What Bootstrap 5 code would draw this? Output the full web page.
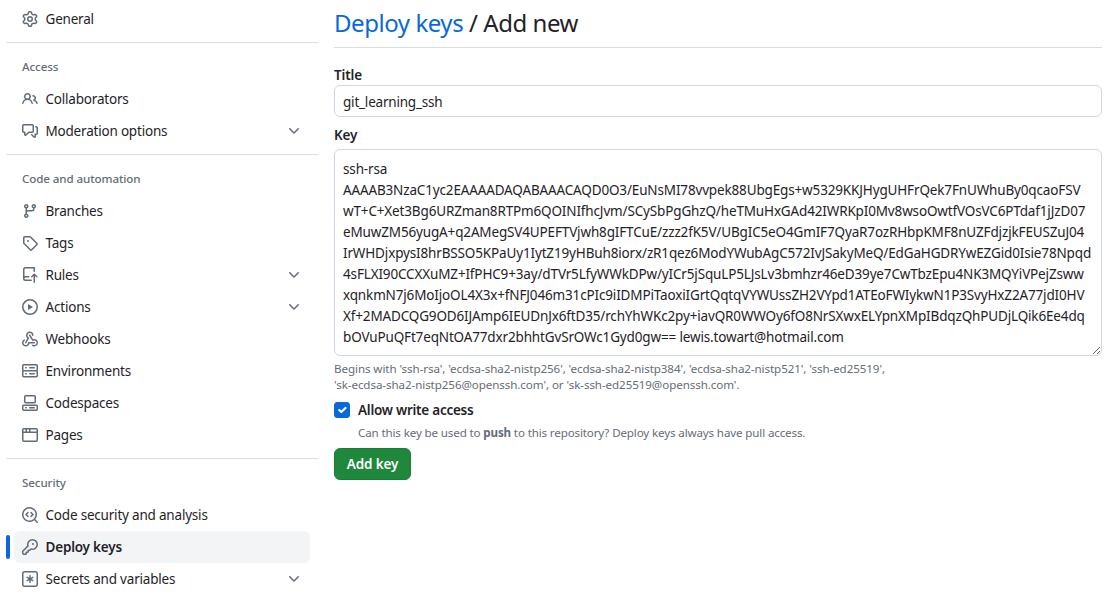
<!DOCTYPE html>
<html>
<head>
    <title>Deploy keys - Add new</title>
    <link rel="stylesheet" href="https://cdn.jsdelivr.net/npm/bootstrap@5.3.0/dist/css/bootstrap.min.css">
    <style>
        body { font-family: "Noto Sans", "Liberation Sans", sans-serif; font-size: 13.5px; color: #1f2328; background: #fff; overflow: hidden; }
        .page-wrap { height: 599px; }
        .side-menu { width: 312px; margin-left: 6px; padding-top: 3px; flex-shrink: 0; }
        .side-item { position: relative; height: 32px; margin: 0 8px; padding: 0 8px; gap: 7.5px; border-radius: 6px; color: #1f2328; text-decoration: none; letter-spacing: -.2px; }
        .side-item svg { width: 16px; height: 16px; fill: #636c76; flex-shrink: 0; }
        .side-item.current { background: #f3f4f6; font-weight: 600; }
        .side-item.current::before { content: ""; position: absolute; left: -8px; top: 4px; width: 4px; height: 24px; border-radius: 6px; background: #0969da; }
        .side-line { height: 1px; margin: 7px 0 0; background: #d8dee4; }
        .side-head { margin: 15px 16px 7px; font-size: 11.6px; line-height: 18px; font-weight: 500; color: #656d76; letter-spacing: -.1px; }
        .main-area { width: 768px; margin-left: 16px; }
        .page-title { height: 48px; margin: 0; font-size: 24px; line-height: 45px; font-weight: 400; border-bottom: 1px solid #d8dee4; letter-spacing: -.45px; }
        .page-title a { color: #0969da; text-decoration: none; }
        .field-label { display: block; margin: 0; font-weight: 600; line-height: 20px; letter-spacing: -.15px; }
        .title-label { margin-top: 17px; }
        .field-input { height: 32px; padding: 1px 8px 0; font-size: 13.5px; line-height: 20px; color: #1f2328; border: 1px solid #d0d7de; border-radius: 6px; letter-spacing: -.2px; }
        .key-box { height: 207px; padding: 9px 8px 7px; font-size: 13.5px; line-height: 21px; color: #1f2328; border: 1px solid #d0d7de; border-radius: 6px; overflow: hidden; white-space: pre; letter-spacing: -.15px; }
        .hint-text { font-size: 11.6px; line-height: 16px; color: #656d76; letter-spacing: -.08px; }
        .key-hint { margin-top: 5px; }
        .write-check { min-height: 0; padding-left: 24px; margin: 7px 0 0; line-height: 20px; }
        .write-check .form-check-input { width: 16px; height: 16px; margin: 2px 0 0 -24px; border-radius: 3px; background-color: #0969da; border-color: #0969da; }
        .write-check .form-check-label { font-weight: 600; letter-spacing: -.25px; }
        .check-hint { margin-top: 5px; letter-spacing: -.14px; }
        .save-btn { width: 77px; height: 32px; margin-top: 7px; padding: 0; font-size: 13.5px; font-weight: 600; background: #1f883d; border: 1px solid #1a7f37; border-radius: 6px; letter-spacing: -.15px; }
    </style>
</head>
<body>
<div class="page-wrap d-flex">
    <nav class="side-menu d-flex flex-column">
        <a class="side-item d-flex align-items-center" href="#"><svg viewBox="0 0 16 16"><path d="M8 0a8.2 8.2 0 0 1 .701.031C9.444.095 9.99.645 10.16 1.29l.288 1.107c.018.066.079.158.212.224.231.114.454.243.668.386.123.082.233.09.299.071l1.103-.303c.644-.176 1.392.021 1.82.63.27.385.506.792.704 1.218.315.675.111 1.422-.364 1.891l-.814.806c-.049.048-.098.147-.088.294.016.257.016.515 0 .772-.01.147.038.246.088.294l.814.806c.475.469.679 1.216.364 1.891a7.977 7.977 0 0 1-.704 1.217c-.428.61-1.176.807-1.82.63l-1.102-.302c-.067-.019-.177-.011-.3.071a5.909 5.909 0 0 1-.668.386c-.133.066-.194.158-.211.224l-.29 1.106c-.168.646-.715 1.196-1.458 1.26a8.006 8.006 0 0 1-1.402 0c-.743-.064-1.289-.614-1.458-1.26l-.289-1.106c-.018-.066-.079-.158-.212-.224a5.738 5.738 0 0 1-.668-.386c-.123-.082-.233-.09-.299-.071l-1.103.303c-.644.176-1.392-.021-1.82-.63a8.12 8.12 0 0 1-.704-1.218c-.315-.675-.111-1.422.363-1.891l.815-.806c.05-.048.098-.147.088-.294a6.214 6.214 0 0 1 0-.772c.01-.147-.038-.246-.088-.294l-.815-.806C.635 6.045.431 5.298.746 4.623a7.92 7.92 0 0 1 .704-1.217c.428-.61 1.176-.807 1.82-.63l1.102.302c.067.019.177.011.3-.071.214-.143.437-.272.668-.386.133-.066.194-.158.211-.224l.29-1.106C6.009.645 6.556.095 7.299.03 7.53.01 7.764 0 8 0Zm-.571 1.525c-.036.003-.108.036-.137.146l-.289 1.105c-.147.561-.549.967-.998 1.189-.173.086-.34.183-.5.29-.417.278-.97.423-1.529.27l-1.103-.303c-.109-.03-.175.016-.195.045-.22.312-.412.644-.573.99-.014.031-.021.11.059.19l.815.806c.411.406.562.957.53 1.456a4.709 4.709 0 0 0 0 .582c.032.499-.119 1.05-.53 1.456l-.815.806c-.081.08-.073.159-.059.19.162.346.353.677.573.989.02.03.085.076.195.046l1.102-.303c.56-.153 1.113-.008 1.53.27.161.107.328.204.501.29.447.222.85.629.997 1.189l.289 1.105c.029.109.101.143.137.146a6.6 6.6 0 0 0 1.142 0c.036-.003.108-.036.137-.146l.289-1.105c.147-.561.549-.967.998-1.189.173-.086.34-.183.5-.29.417-.278.97-.423 1.529-.27l1.103.303c.109.029.175-.016.195-.045.22-.313.411-.644.573-.99.014-.031.021-.11-.059-.19l-.815-.806c-.411-.406-.562-.957-.53-1.456a4.709 4.709 0 0 0 0-.582c-.032-.499.119-1.05.53-1.456l.815-.806c.081-.08.073-.159.059-.19a6.464 6.464 0 0 0-.573-.989c-.02-.03-.085-.076-.195-.046l-1.102.303c-.56.153-1.113.008-1.53-.27a4.44 4.44 0 0 0-.501-.29c-.447-.222-.85-.629-.997-1.189l-.289-1.105c-.029-.11-.101-.143-.137-.146a6.6 6.6 0 0 0-1.142 0ZM11 8a3 3 0 1 1-6 0 3 3 0 0 1 6 0ZM9.5 8a1.5 1.5 0 1 0-3.001.001A1.5 1.5 0 0 0 9.5 8Z"/></svg>General</a>
        <div class="side-line"></div>
        <div class="side-head">Access</div>
        <a class="side-item d-flex align-items-center" href="#"><svg viewBox="0 0 16 16"><path d="M2 5.5a3.5 3.5 0 1 1 5.898 2.549 5.508 5.508 0 0 1 3.034 4.084.75.75 0 1 1-1.482.235 4 4 0 0 0-7.9 0 .75.75 0 0 1-1.482-.236A5.507 5.507 0 0 1 3.102 8.05 3.493 3.493 0 0 1 2 5.5ZM11 4a3.001 3.001 0 0 1 2.22 5.018 5.01 5.01 0 0 1 2.56 3.012.749.749 0 0 1-.885.954.752.752 0 0 1-.549-.514 3.507 3.507 0 0 0-2.522-2.372.75.75 0 0 1-.574-.73v-.352a.75.75 0 0 1 .416-.672A1.5 1.5 0 0 0 11 5.5.75.75 0 0 1 11 4Zm-5.5-.5a2 2 0 1 0-.001 3.999A2 2 0 0 0 5.5 3.5Z"/></svg>Collaborators</a>
        <a class="side-item d-flex align-items-center" href="#"><svg viewBox="0 0 16 16"><path d="M1.75 1h8.5c.966 0 1.75.784 1.75 1.75v5.5A1.75 1.75 0 0 1 10.25 10H7.061l-2.574 2.573A1.458 1.458 0 0 1 2 11.543V10h-.25A1.75 1.75 0 0 1 0 8.25v-5.5C0 1.784.784 1 1.75 1ZM1.5 2.75v5.5c0 .138.112.25.25.25h1a.75.75 0 0 1 .75.75v2.19l2.72-2.72a.749.749 0 0 1 .53-.22h3.5a.25.25 0 0 0 .25-.25v-5.5a.25.25 0 0 0-.25-.25h-8.5a.25.25 0 0 0-.25.25Zm13 2a.25.25 0 0 0-.25-.25h-.5a.75.75 0 0 1 0-1.5h.5c.966 0 1.75.784 1.75 1.75v5.5A1.75 1.75 0 0 1 14.25 12H14v1.543a1.458 1.458 0 0 1-2.487 1.03L9.22 12.28a.749.749 0 0 1 .326-1.275.749.749 0 0 1 .734.215l2.22 2.22v-2.19a.75.75 0 0 1 .75-.75h1a.25.25 0 0 0 .25-.25Z"/></svg>Moderation options<svg class="ms-auto" viewBox="0 0 16 16"><path d="M12.78 5.22a.749.749 0 0 1 0 1.06l-4.25 4.25a.749.749 0 0 1-1.06 0L3.22 6.28a.749.749 0 1 1 1.06-1.06L8 8.939l3.72-3.719a.749.749 0 0 1 1.06 0Z"/></svg></a>
        <div class="side-line"></div>
        <div class="side-head">Code and automation</div>
        <a class="side-item d-flex align-items-center" href="#"><svg viewBox="0 0 16 16"><path d="M9.5 3.25a2.25 2.25 0 1 1 3 2.122V6A2.5 2.5 0 0 1 10 8.5H6a1 1 0 0 0-1 1v1.128a2.251 2.251 0 1 1-1.5 0V5.372a2.25 2.25 0 1 1 1.5 0v1.836A2.493 2.493 0 0 1 6 7h4a1 1 0 0 0 1-1v-.628A2.25 2.25 0 0 1 9.5 3.25Zm-6 0a.75.75 0 1 0 1.5 0 .75.75 0 0 0-1.5 0Zm8.25-.75a.75.75 0 1 0 0 1.5.75.75 0 0 0 0-1.5ZM4.25 12a.75.75 0 1 0 0 1.5.75.75 0 0 0 0-1.5Z"/></svg>Branches</a>
        <a class="side-item d-flex align-items-center" href="#"><svg viewBox="0 0 16 16"><path d="M1 7.775V2.75C1 1.784 1.784 1 2.75 1h5.025c.464 0 .91.184 1.238.513l6.25 6.25a1.75 1.75 0 0 1 0 2.474l-5.026 5.026a1.75 1.75 0 0 1-2.474 0l-6.25-6.25A1.752 1.752 0 0 1 1 7.775Zm1.5 0c0 .066.026.13.073.177l6.25 6.25a.25.25 0 0 0 .354 0l5.025-5.025a.25.25 0 0 0 0-.354l-6.25-6.25a.25.25 0 0 0-.177-.073H2.75a.25.25 0 0 0-.25.25ZM6 5a1 1 0 1 1 0 2 1 1 0 0 1 0-2Z"/></svg>Tags</a>
        <a class="side-item d-flex align-items-center" href="#"><svg viewBox="0 0 16 16"><path d="M1 2.5A2.5 2.5 0 0 1 3.5 0h8.75a.75.75 0 0 1 .75.75v3.5a.75.75 0 0 1-1.5 0V1.5h-8a1 1 0 0 0-1 1v6.708A2.493 2.493 0 0 1 3.5 9h3.25a.75.75 0 0 1 0 1.5H3.5a1 1 0 0 0 0 2h5.75a.75.75 0 0 1 0 1.5H3.5A2.5 2.5 0 0 1 1 11.5Zm13.23 7.79h-.001l-1.224-1.224v6.184a.75.75 0 0 1-1.5 0V9.066L10.28 10.29a.75.75 0 0 1-1.06-1.061l2.505-2.504a.75.75 0 0 1 1.06 0L15.29 9.23a.751.751 0 0 1-.018 1.042.751.751 0 0 1-1.042.018Z"/></svg>Rules<svg class="ms-auto" viewBox="0 0 16 16"><path d="M12.78 5.22a.749.749 0 0 1 0 1.06l-4.25 4.25a.749.749 0 0 1-1.06 0L3.22 6.28a.749.749 0 1 1 1.06-1.06L8 8.939l3.72-3.719a.749.749 0 0 1 1.06 0Z"/></svg></a>
        <a class="side-item d-flex align-items-center" href="#"><svg viewBox="0 0 16 16"><path d="M8 0a8 8 0 1 1 0 16A8 8 0 0 1 8 0ZM1.5 8a6.5 6.5 0 1 0 13 0 6.5 6.5 0 0 0-13 0Zm4.879-2.773 4.264 2.559a.25.25 0 0 1 0 .428l-4.264 2.559A.25.25 0 0 1 6 10.559V5.442a.25.25 0 0 1 .379-.215Z"/></svg>Actions<svg class="ms-auto" viewBox="0 0 16 16"><path d="M12.78 5.22a.749.749 0 0 1 0 1.06l-4.25 4.25a.749.749 0 0 1-1.06 0L3.22 6.28a.749.749 0 1 1 1.06-1.06L8 8.939l3.72-3.719a.749.749 0 0 1 1.06 0Z"/></svg></a>
        <a class="side-item d-flex align-items-center" href="#"><svg viewBox="0 0 16 16"><path d="M5.5 4.25a2.25 2.25 0 0 1 4.5 0 .75.75 0 0 0 1.5 0 3.75 3.75 0 1 0-6.14 2.889l-2.272 4.258a.75.75 0 0 0 1.324.706L7 7.25a.75.75 0 0 0-.309-1.015A2.25 2.25 0 0 1 5.5 4.25Z"/><path d="M7.364 3.607a.75.75 0 0 1 1.03.257l2.608 4.349a3.75 3.75 0 1 1-.628 6.785.75.75 0 0 1 .752-1.299 2.25 2.25 0 1 0-.033-3.88.75.75 0 0 1-1.03-.256L7.107 4.636a.75.75 0 0 1 .257-1.03Z"/><path d="M2.9 8.776A.75.75 0 0 1 2.625 9.8 2.25 2.25 0 1 0 6 11.75a.75.75 0 0 1 .75-.751h5.5a.75.75 0 0 1 0 1.5H7.425a3.751 3.751 0 1 1-5.55-3.998.75.75 0 0 1 1.024.274Z"/></svg>Webhooks</a>
        <a class="side-item d-flex align-items-center" href="#"><svg viewBox="0 0 16 16"><path d="M1.75 1h12.5c.966 0 1.75.784 1.75 1.75v4c0 .372-.116.717-.314 1 .198.283.314.628.314 1v4a1.75 1.75 0 0 1-1.75 1.75H1.75A1.75 1.75 0 0 1 0 12.75v-4c0-.358.109-.707.314-1a1.739 1.739 0 0 1-.314-1v-4C0 1.784.784 1 1.75 1ZM1.5 2.75v4c0 .138.112.25.25.25h12.5a.25.25 0 0 0 .25-.25v-4a.25.25 0 0 0-.25-.25H1.75a.25.25 0 0 0-.25.25Zm.25 5.75a.25.25 0 0 0-.25.25v4c0 .138.112.25.25.25h12.5a.25.25 0 0 0 .25-.25v-4a.25.25 0 0 0-.25-.25ZM7 4.75A.75.75 0 0 1 7.75 4h4.5a.75.75 0 0 1 0 1.5h-4.5A.75.75 0 0 1 7 4.75ZM7.75 10h4.5a.75.75 0 0 1 0 1.5h-4.5a.75.75 0 0 1 0-1.5ZM3 4.75A.75.75 0 0 1 3.75 4h.5a.75.75 0 0 1 0 1.5h-.5A.75.75 0 0 1 3 4.75ZM3.75 10h.5a.75.75 0 0 1 0 1.5h-.5a.75.75 0 0 1 0-1.5Z"/></svg>Environments</a>
        <a class="side-item d-flex align-items-center" href="#"><svg viewBox="0 0 16 16"><path d="M0 11.25c0-.966.784-1.75 1.75-1.75h12.5c.966 0 1.75.784 1.75 1.75v3A1.75 1.75 0 0 1 14.25 16H1.75A1.75 1.75 0 0 1 0 14.25Zm2-9.5C2 .784 2.784 0 3.75 0h8.5C13.216 0 14 .784 14 1.75v5a1.75 1.75 0 0 1-1.75 1.75h-8.5A1.75 1.75 0 0 1 2 6.75Zm1.75-.25a.25.25 0 0 0-.25.25v5c0 .138.112.25.25.25h8.5a.25.25 0 0 0 .25-.25v-5a.25.25 0 0 0-.25-.25Zm-2 9.5a.25.25 0 0 0-.25.25v3c0 .138.112.25.25.25h12.5a.25.25 0 0 0 .25-.25v-3a.25.25 0 0 0-.25-.25Z"/><path d="M7 12.75a.75.75 0 0 1 .75-.75h4.5a.75.75 0 0 1 0 1.5h-4.5a.75.75 0 0 1-.75-.75Zm-4 0a.75.75 0 0 1 .75-.75h.5a.75.75 0 0 1 0 1.5h-.5a.75.75 0 0 1-.75-.75Z"/></svg>Codespaces</a>
        <a class="side-item d-flex align-items-center" href="#"><svg viewBox="0 0 16 16"><path d="M0 2.75C0 1.784.784 1 1.75 1h12.5c.966 0 1.75.784 1.75 1.75v10.5A1.75 1.75 0 0 1 14.25 15H1.75A1.75 1.75 0 0 1 0 13.25ZM14.5 6h-13v7.25c0 .138.112.25.25.25h12.5a.25.25 0 0 0 .25-.25Zm-6-3.5v2h6V2.75a.25.25 0 0 0-.25-.25ZM5 2.5v2h2v-2Zm-3.25 0a.25.25 0 0 0-.25.25V4.5h2v-2Z"/></svg>Pages</a>
        <div class="side-line"></div>
        <div class="side-head">Security</div>
        <a class="side-item d-flex align-items-center" href="#"><svg viewBox="0 0 16 16"><path d="M8.47 4.97a.75.75 0 0 0 0 1.06L9.94 7.5 8.47 8.97a.75.75 0 1 0 1.06 1.06l2-2a.75.75 0 0 0 0-1.06l-2-2a.75.75 0 0 0-1.06 0ZM6.53 6.03a.75.75 0 0 0-1.06-1.06l-2 2a.75.75 0 0 0 0 1.06l2 2a.75.75 0 1 0 1.06-1.06L5.06 7.5l1.47-1.47Z"/><path d="M12.246 13.307a7.501 7.501 0 1 1 1.06-1.06l2.474 2.473a.749.749 0 0 1-.326 1.275.749.749 0 0 1-.734-.215ZM1.5 7.5a6.002 6.002 0 0 0 3.608 5.504 6.002 6.002 0 0 0 6.486-1.117.748.748 0 0 1 .292-.293A6 6 0 1 0 1.5 7.5Z"/></svg>Code security and analysis</a>
        <a class="side-item current d-flex align-items-center" href="#"><svg viewBox="0 0 16 16"><path d="M10.5 0a5.499 5.499 0 1 1-1.288 10.848l-.932.932a.749.749 0 0 1-.53.22H7v.75a.749.749 0 0 1-.22.53l-.5.5a.749.749 0 0 1-.53.22H5v.75a.749.749 0 0 1-.22.53l-.5.5a.749.749 0 0 1-.53.22h-2A1.75 1.75 0 0 1 0 14.25v-2c0-.199.079-.389.22-.53l4.932-4.932A5.5 5.5 0 0 1 10.5 0Zm-4 5.5c-.001.431.069.86.205 1.269a.75.75 0 0 1-.181.768L1.5 12.56v1.69c0 .138.112.25.25.25h1.69l.06-.06v-1.19a.75.75 0 0 1 .75-.75h1.19l.06-.06v-1.19a.75.75 0 0 1 .75-.75h1.19l1.023-1.025a.75.75 0 0 1 .768-.18A4 4 0 1 0 6.5 5.5ZM11 6a1 1 0 1 1 0-2 1 1 0 0 1 0 2Z"/></svg>Deploy keys</a>
        <a class="side-item d-flex align-items-center" href="#"><svg viewBox="0 0 16 16"><path d="M0 2.75A2.75 2.75 0 0 1 2.75 0h10.5A2.75 2.75 0 0 1 16 2.75v10.5A2.75 2.75 0 0 1 13.25 16H2.75A2.75 2.75 0 0 1 0 13.25ZM2.75 1.5c-.69 0-1.25.56-1.25 1.25v10.5c0 .69.56 1.25 1.25 1.25h10.5c.69 0 1.25-.56 1.25-1.25V2.75c0-.69-.56-1.25-1.25-1.25Z"/><path d="M8 4a.75.75 0 0 1 .75.75V6.7l1.69-.975a.75.75 0 0 1 .75 1.3L9.5 8l1.69.976a.75.75 0 0 1-.75 1.298L8.75 9.3v1.951a.75.75 0 0 1-1.5 0V9.299l-1.69.976a.75.75 0 0 1-.75-1.3L6.5 8l-1.69-.975a.75.75 0 0 1 .75-1.3l1.69.976V4.75A.75.75 0 0 1 8 4Z"/></svg>Secrets and variables<svg class="ms-auto" viewBox="0 0 16 16"><path d="M12.78 5.22a.749.749 0 0 1 0 1.06l-4.25 4.25a.749.749 0 0 1-1.06 0L3.22 6.28a.749.749 0 1 1 1.06-1.06L8 8.939l3.72-3.719a.749.749 0 0 1 1.06 0Z"/></svg></a>
    </nav>
    <main class="main-area">
        <h1 class="page-title"><a href="#">Deploy keys</a> / Add new</h1>
        <form>
            <label class="field-label title-label" for="key-title">Title</label>
            <input id="key-title" class="form-control field-input" type="text" value="git_learning_ssh">
            <label class="field-label mt-2" for="key-body">Key</label>
            <textarea id="key-body" class="form-control key-box mt-1" wrap="off">ssh-rsa
AAAAB3NzaC1yc2EAAAADAQABAAACAQD0O3/EuNsMI78vvpek88UbgEgs+w5329KKJHygUHFrQek7FnUWhuBy0qcaoFSV
wT+C+Xet3Bg6URZman8RTPm6QOINIfhcJvm/SCySbPgGhzQ/heTMuHxGAd42IWRKpI0Mv8wsoOwtfVOsVC6PTdaf1jJzD07
eMuwZM56yugA+q2AMegSV4UPEFTVjwh8gIFTCuE/zzz2fK5V/UBgIC5eO4GmIF7QyaR7ozRHbpKMF8nUZFdjzjkFEUSZuJ04
IrWHDjxpysI8hrBSSO5KPaUy1IytZ19yHBuh8iorx/zR1qez6ModYWubAgC572IvJSakyMeQ/EdGaHGDRYwEZGid0Isie78Npqd
4sFLXI90CCXXuMZ+IfPHC9+3ay/dTVr5LfyWWkDPw/yICr5jSquLP5LJsLv3bmhzr46eD39ye7CwTbzEpu4NK3MQYiVPejZsww
xqnkmN7j6MoIjoOL4X3x+fNFJ046m31cPIc9iIDMPiTaoxiIGrtQqtqVYWUssZH2VYpd1ATEoFWIykwN1P3SvyHxZ2A77jdI0HV
Xf+2MADCQG9OD6IJAmp6IEUDnJx6ftD35/rchYhWKc2py+iavQR0WWOy6fO8NrSXwxELYpnXMpIBdqzQhPUDjLQik6Ee4dq
bOVuPuQFt7eqNtOA77dxr2bhhtGvSrOWc1Gyd0gw== lewis.towart@hotmail.com</textarea>
            <div class="hint-text key-hint">Begins with 'ssh-rsa', 'ecdsa-sha2-nistp256', 'ecdsa-sha2-nistp384', 'ecdsa-sha2-nistp521', 'ssh-ed25519',<br>'sk-ecdsa-sha2-nistp256@openssh.com', or 'sk-ssh-ed25519@openssh.com'.</div>
            <div class="form-check write-check">
                <input class="form-check-input" type="checkbox" id="write-access" checked>
                <label class="form-check-label" for="write-access">Allow write access</label>
                <div class="hint-text check-hint">Can this key be used to <b>push</b> to this repository? Deploy keys always have pull access.</div>
            </div>
            <button class="btn btn-success save-btn" type="button">Add key</button>
        </form>
    </main>
</div>
</body>
</html>
